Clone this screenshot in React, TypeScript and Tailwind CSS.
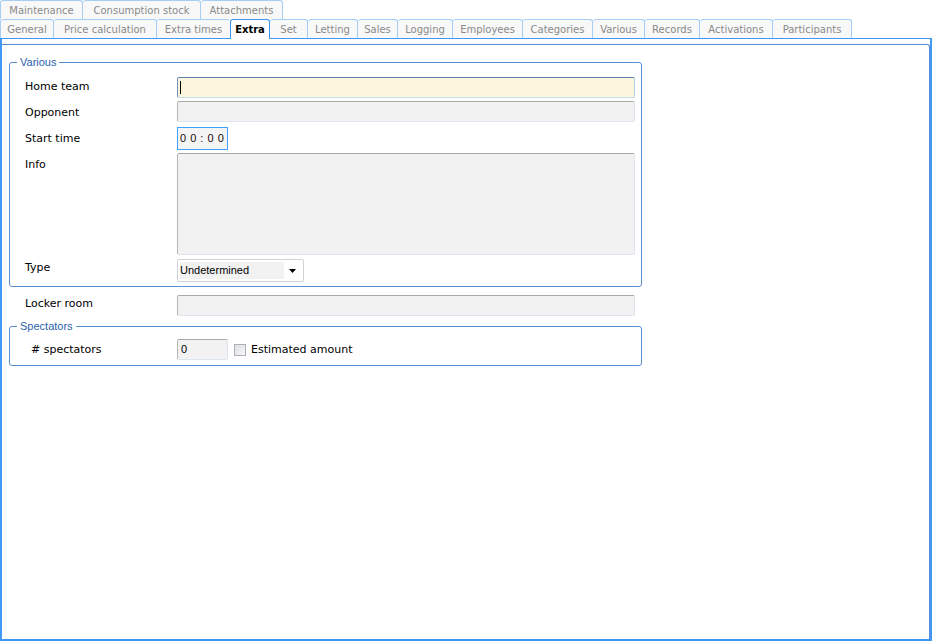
import { ReactNode } from "react";

const topTabs = [
  { label: "Maintenance", w: "w-[83px]" },
  { label: "Consumption stock", w: "w-[118px]" },
  { label: "Attachments", w: "w-[82px]" },
];

const tabs = [
  { label: "General", w: "w-[54px]", cls: "border-l border-r" },
  { label: "Price calculation", w: "w-[103px]", cls: "border-r" },
  { label: "Extra times", w: "w-[73px]", cls: "" },
  { label: "Extra", w: "w-[40px]", cls: "", active: true },
  { label: "Set", w: "w-[38px]", cls: "border-r" },
  { label: "Letting", w: "w-[50px]", cls: "border-r" },
  { label: "Sales", w: "w-[40px]", cls: "border-r" },
  { label: "Logging", w: "w-[55px]", cls: "border-r" },
  { label: "Employees", w: "w-[70px]", cls: "border-r" },
  { label: "Categories", w: "w-[70px]", cls: "border-r" },
  { label: "Various", w: "w-[52px]", cls: "border-r" },
  { label: "Records", w: "w-[55px]", cls: "border-r" },
  { label: "Activations", w: "w-[73px]", cls: "border-r" },
  { label: "Participants", w: "w-[79px]", cls: "border-r" },
];

const verdana = "font-['DejaVu_Sans',Verdana,sans-serif]";
const tahoma = "font-['Liberation_Sans',Tahoma,sans-serif]";

function Label({ children, className = "w-[152px]" }: { children: ReactNode; className?: string }) {
  return <div className={`shrink-0 text-[11px] text-black ${verdana} ${className}`}>{children}</div>;
}

function GroupBox({ title, className = "", children }: { title: string; className?: string; children: ReactNode }) {
  return (
    <div className={`relative ml-[7px] w-[633px] rounded-[3px] border border-[#5b8fd4] ${className}`}>
      {/* legend sits on the border line */}
      <span className={`absolute -top-[8px] left-[7px] bg-white px-[3px] text-[11px] leading-[14px] text-[#2a62ad] ${tahoma}`}>
        {title}
      </span>
      {children}
    </div>
  );
}

const greyInput =
  "h-[21px] shrink-0 bg-[#f2f2f2] border border-t-[#a9a9a9] border-l-[#b5b5b5] border-r-[#dde5ee] border-b-[#dde5ee] rounded-[2px]";

export default function App() {
  return (
    <div className="w-[932px] h-[641px] bg-white overflow-hidden flex flex-col select-none">
      {/* tab strip, first row */}
      <div className="flex h-[19px] shrink-0">
        {topTabs.map((t, i) => (
          <div
            key={t.label}
            className={`${t.w} h-[19px] flex items-center justify-center border-t border-r ${i === 0 ? "border-l" : ""} border-[#a6cdf3] rounded-t-[3px] bg-[#f8f8f8] text-[10px] text-[#8a8a8a] ${verdana}`}
          >
            {t.label}
          </div>
        ))}
      </div>

      {/* tab strip, second row */}
      <div className="flex h-[19px] shrink-0 relative z-10">
        {tabs.map((t) =>
          t.active ? (
            <div
              key={t.label}
              className={`${t.w} h-[20px] flex items-center justify-center border-t border-x border-[#3b95f2] rounded-t-[3px] bg-white text-[10px] font-bold text-black pb-px ${verdana}`}
            >
              {t.label}
            </div>
          ) : (
            <div
              key={t.label}
              className={`${t.w} h-[19px] flex items-center justify-center border-t ${t.cls} border-[#a6cdf3] rounded-t-[3px] bg-[#f8f8f8] text-[10px] text-[#8a8a8a] ${verdana}`}
            >
              {t.label}
            </div>
          )
        )}
      </div>

      {/* page frame */}
      <div className="flex-1 flex flex-col border-t border-x-2 border-b-2 border-[#3f98f3]">
        <div className="flex-1 mt-[5px] border-t border-r border-[#5b8fd4] rounded-tr-[3px] pt-[17px]">
          <GroupBox title="Various" className="pt-[14px] pb-[4px]">
            <div className="flex flex-col pl-[15px]">
              <div className="flex items-center h-[21px]">
                <Label>Home team</Label>
                <div className="h-[21px] w-[458px] bg-[#fef6dc] border border-t-[#5a7eae] border-l-[#6f90bd] border-r-[#a9cdea] border-b-[#c5dcef] rounded-[2px] flex items-center pl-[2px]">
                  <div className="w-px h-[13px] bg-black" />
                </div>
              </div>

              <div className="flex items-center h-[21px] mt-[3px]">
                <Label className="w-[152px] pt-[3px]">Opponent</Label>
                <div className={`${greyInput} w-[458px]`} />
              </div>

              <div className="flex items-center h-[23px] mt-[5px]">
                <Label className="w-[152px] pt-[1px]">Start time</Label>
                <div className="h-[23px] w-[51px] shrink-0 shadow-[inset_0_0_0_1px_#3ea0ff] bg-[#f4f4f4] flex items-center pl-[3px] whitespace-nowrap">
                  <span className={`text-[11px] tracking-[0.5px] text-[#1a0a0a] ${tahoma}`}>0 0 : 0 0</span>
                </div>
              </div>

              <div className="flex items-start h-[102px] mt-[3px]">
                <Label className="w-[152px] pt-[4px]">Info</Label>
                <div className="h-[102px] w-[458px] bg-[#f2f2f2] border border-t-[#a9a9a9] border-l-[#b5b5b5] border-r-[#dde5ee] border-b-[#dde5ee] rounded-[2px]" />
              </div>

              <div className="flex items-start h-[23px] mt-[4px]">
                <Label className="w-[152px] pt-[1px]">Type</Label>
                <div className="h-[23px] w-[127px] shadow-[inset_0_0_0_1px_#cfd3d8] rounded-[2px] bg-white flex items-center p-[3px]">
                  <div className={`h-full w-[104px] bg-[#f2f2f2] flex items-center pl-[0px] text-[11px] text-black ${tahoma}`}>
                    Undetermined
                  </div>
                  <div className="flex-1 flex items-center justify-center">
                    <svg width="7" height="4" viewBox="0 0 7 4">
                      <path d="M0 0h7L3.5 4z" fill="#000" />
                    </svg>
                  </div>
                </div>
              </div>
            </div>
          </GroupBox>

          <div className="flex items-center h-[21px] mt-[8px] pl-[23px]">
            <Label className="w-[152px] pb-[3px]">Locker room</Label>
            <div className={`${greyInput} w-[458px]`} />
          </div>

          <GroupBox title="Spectators" className="mt-[10px] pt-[12px] pb-[5px]">
            <div className="flex items-center h-[21px] pl-[21px]">
              <Label className="w-[146px] pt-[2px]"># spectators</Label>
              <div className={`${greyInput} w-[51px] flex items-center pl-[3px] text-[11px] text-black ${tahoma}`}>0</div>
              <div className="ml-[6px] w-[12px] h-[12px] shrink-0 shadow-[inset_0_0_0_1px_#a7b0ba] bg-gradient-to-br from-[#dcdcdc] to-[#fbfbfb]" />
              <span className={`ml-[5px] pt-[2px] text-[11px] text-black ${verdana}`}>Estimated amount</span>
            </div>
          </GroupBox>
        </div>
      </div>
    </div>
  );
}
